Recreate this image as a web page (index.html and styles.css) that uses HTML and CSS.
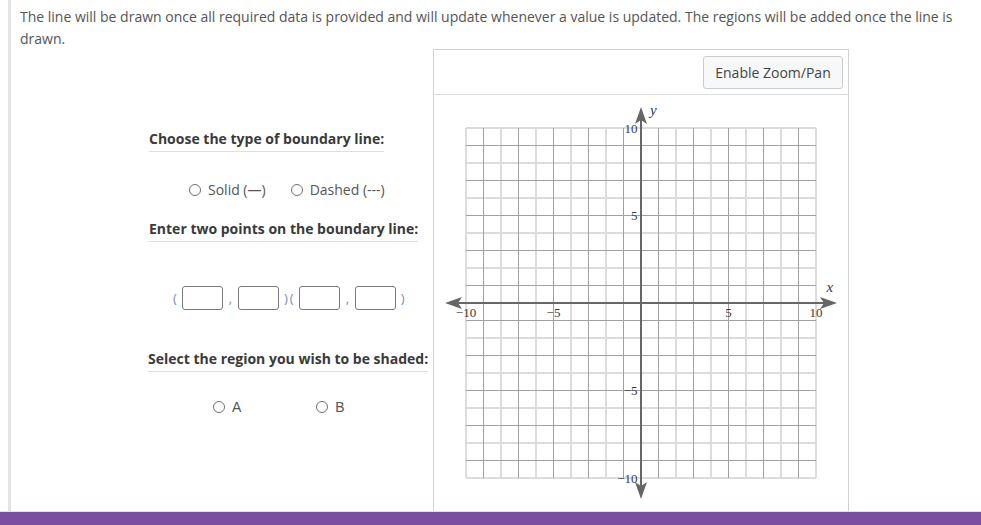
FILE: index.html
```html
<!DOCTYPE html>
<html lang="en">
<head>
<meta charset="utf-8">
<title>Boundary line graph</title>
<link rel="stylesheet" href="styles.css">
</head>
<body>
<div class="page">
  <p class="intro">The line will be drawn once all required data is provided and will update whenever a value is updated. The regions will be added once the line is drawn.</p>
  <div class="main">
    <div class="controls-col">
      <div class="controls">
        <h3 class="heading h-type">Choose the type of boundary line:</h3>
        <div class="radio-row type-row">
          <label class="radio"><input type="radio" name="linetype"><span>Solid (—)</span></label>
          <label class="radio"><input type="radio" name="linetype"><span>Dashed (---)</span></label>
        </div>
        <h3 class="heading h-points">Enter two points on the boundary line:</h3>
        <div class="points-row">
          <span class="sep sep-open">(</span>
          <input class="pt-box" type="text">
          <span class="sep sep-comma">,</span>
          <input class="pt-box" type="text">
          <span class="sep sep-mid">)(</span>
          <input class="pt-box" type="text">
          <span class="sep sep-comma">,</span>
          <input class="pt-box" type="text">
          <span class="sep sep-close">)</span>
        </div>
        <h3 class="heading h-region">Select the region you wish to be shaded:</h3>
        <div class="radio-row region-row">
          <label class="radio region-a"><input type="radio" name="region"><span>A</span></label>
          <label class="radio region-b"><input type="radio" name="region"><span>B</span></label>
        </div>
      </div>
    </div>
    <div class="graph-panel">
      <div class="graph-header"><button class="zoom-btn" type="button">Enable Zoom/Pan</button></div>
      <svg class="graph" width="414" height="420" viewBox="0 0 414 420" xmlns="http://www.w3.org/2000/svg">
        <path class="grid-light" d="M32 33V383M67 33V383M102 33V383M137 33V383M172 33V383M207 33V383M242 33V383M277 33V383M312 33V383M347 33V383M382 33V383M32 33H382M32 68H382M32 103H382M32 138H382M32 173H382M32 208H382M32 243H382M32 278H382M32 313H382M32 348H382M32 383H382"/>
        <path class="grid-dark" d="M49.5 33V383M84.5 33V383M119.5 33V383M154.5 33V383M189.5 33V383M224.5 33V383M259.5 33V383M294.5 33V383M329.5 33V383M364.5 33V383M32 50.5H382M32 85.5H382M32 120.5H382M32 155.5H382M32 190.5H382M32 225.5H382M32 260.5H382M32 295.5H382M32 330.5H382M32 365.5H382"/>
        <path class="axis" d="M24 208H390M207 25V391"/>
        <path class="arrow" d="M11 208L28 202L24 208L28 214Z"/>
        <path class="arrow" d="M403 208L386 202L390 208L386 214Z"/>
        <path class="arrow" d="M207 12L201 29L207 25L213 29Z"/>
        <path class="arrow" d="M207 404L201 387L207 391L213 387Z"/>
        <g class="tick-label x-labels">
          <text x="32" y="222">−10</text>
          <text x="119.5" y="222">−5</text>
          <text x="294.5" y="222">5</text>
          <text x="382" y="222">10</text>
        </g>
        <g class="tick-label y-labels">
          <text x="203.5" y="37.5">10</text>
          <text x="203.5" y="125">5</text>
          <text x="203.5" y="300">−5</text>
          <text x="203.5" y="387.5">−10</text>
        </g>
        <text class="axis-name" x="216" y="20">y</text>
        <text class="axis-name" x="392.5" y="197">x</text>
      </svg>
    </div>
  </div>
</div>
<div class="footer-bar"></div>
</body>
</html>
```
FILE: styles.css
```css
html, body {
  margin: 0;
  padding: 0;
  background: #ffffff;
}

body {
  font-family: "Open Sans", "Liberation Sans", sans-serif;
  font-size: 14px;
  color: #555555;
  overflow: hidden;
}

.page {
  margin-left: 8px;
  border-left: 3px solid #e4e4e4;
  padding-left: 9px;
  min-height: 100vh;
  box-sizing: border-box;
}

.intro {
  margin: 0;
  padding-top: 6px;
  font-size: 14px;
  line-height: 21.7px;
  color: #555555;
}

.main {
  display: flex;
  align-items: flex-start;
}

.controls-col {
  width: 413px;
  flex: none;
}

.controls {
  margin-left: 129px;
  width: 284px;
  display: flex;
  flex-direction: column;
  align-items: flex-start;
}

.heading {
  margin: 0;
  font-size: 14px;
  font-weight: 700;
  line-height: 20px;
  color: #3a3a3a;
  padding-bottom: 2px;
  border-bottom: 1px solid #dedede;
}

.h-type { margin-top: 80px; }
.h-points { margin-top: 19px; }
.h-region { margin-top: 39px; margin-left: -1px; }

.radio-row {
  display: flex;
  align-items: center;
  height: 20px;
}

.type-row {
  margin-top: 28px;
  padding-left: 40px;
  gap: 25px;
}

.region-row {
  margin-top: 25px;
  padding-left: 64px;
  gap: 75px;
}

.radio {
  display: flex;
  align-items: center;
  gap: 7px;
  font-size: 14px;
  line-height: 20px;
  color: #555555;
}

.region-row .radio {
  font-family: "Liberation Sans", Arial, sans-serif;
  gap: 7px;
}

.radio input {
  appearance: none;
  -webkit-appearance: none;
  width: 12px;
  height: 12px;
  margin: 0;
  border: 1px solid #6f6f6f;
  border-radius: 50%;
  background: #ffffff;
  box-sizing: border-box;
}

.points-row {
  margin-top: 44px;
  padding-left: 24px;
  display: flex;
  align-items: center;
  height: 24px;
}

.pt-box {
  width: 41px;
  height: 24px;
  box-sizing: border-box;
  border: 1px solid #7a7a7a;
  border-radius: 3px;
  margin: 0;
  padding: 0;
  background: #ffffff;
}

.sep {
  font-size: 13px;
  line-height: 24px;
  color: #6f8db3;
  text-align: center;
}

.sep-open { margin-right: 5px; }
.sep-comma { width: 15px; }
.sep-mid { width: 20px; letter-spacing: 2px; text-indent: 2px; }
.sep-close { margin-left: 5px; }

.graph-panel {
  width: 416px;
  flex: none;
  box-sizing: border-box;
  border: 1px solid #d2d2d2;
}

.graph-header {
  display: flex;
  justify-content: flex-end;
  padding: 6px 5px 5px 5px;
  border-bottom: 1px solid #dddddd;
}

.zoom-btn {
  width: 140px;
  height: 33px;
  box-sizing: border-box;
  border: 1px solid #cccccc;
  border-radius: 3px;
  background: #f7f8f9;
  font-family: "Open Sans", "Liberation Sans", sans-serif;
  font-size: 14px;
  color: #444444;
  padding: 0;
}

.graph {
  display: block;
}

.grid-light {
  fill: none;
  stroke: #dcdcdc;
  stroke-width: 2;
}

.grid-dark {
  fill: none;
  stroke: #a0a0a0;
  stroke-width: 1;
}

.axis {
  fill: none;
  stroke: #666666;
  stroke-width: 2;
}

.arrow {
  fill: #666666;
}

.tick-label text {
  font-family: "Liberation Serif", "Times New Roman", serif;
  font-size: 13px;
  fill: #3a3a3a;
}

.x-labels text { text-anchor: middle; }
.y-labels text { text-anchor: end; }

.axis-name {
  font-family: "Liberation Serif", "Times New Roman", serif;
  font-style: italic;
  font-size: 15px;
  fill: #333a55;
}

.footer-bar {
  position: fixed;
  left: 0;
  right: 0;
  bottom: 0;
  height: 13px;
  background: #7a4fa1;
  border-top: 1px solid #e2e2e2;
}
```
